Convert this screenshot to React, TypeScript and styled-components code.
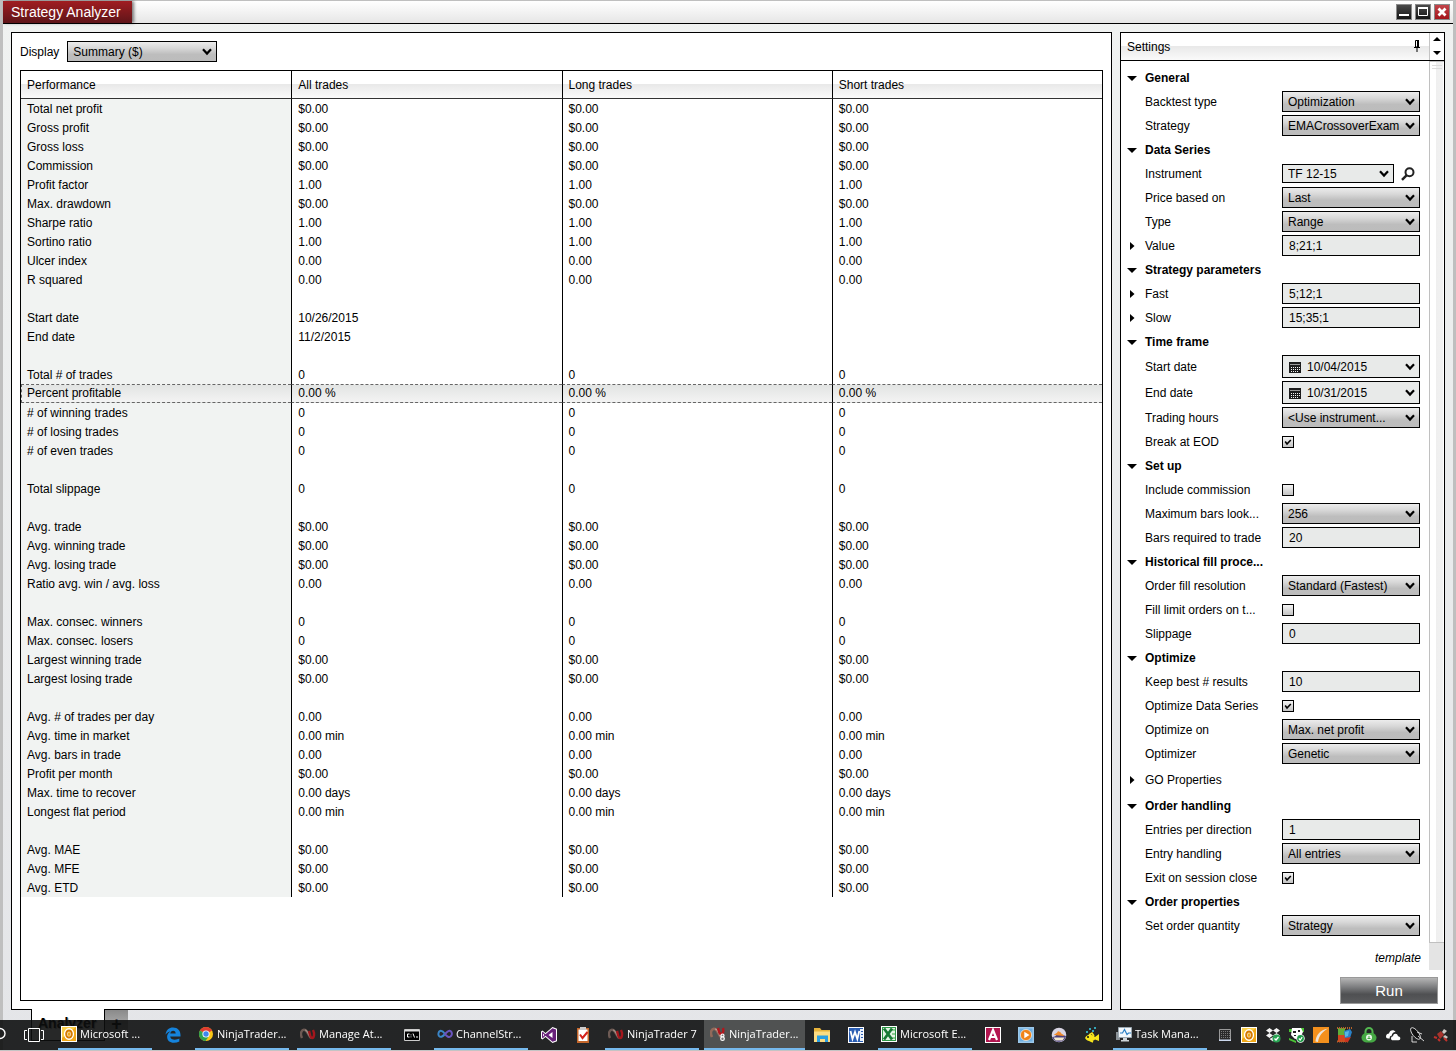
import React, { useId, useState } from "react";
import styled, { createGlobalStyle, css } from "styled-components";

const INK = "#000";
const BODY_FONT = '"Liberation Sans", Arial, sans-serif';
const TASK_FONT = '"Open Sans", "Noto Sans", sans-serif';
const SILVER = "linear-gradient(#ececec 0%, #d6d6d6 35%, #bdbdbd 65%, #bcbcbc 100%)";

const GlobalStyle = createGlobalStyle`
  *, *::before, *::after { box-sizing: border-box; }
  body { margin: 0; background: #bfbfbf; color: ${INK}; font: 12px/16px ${BODY_FONT}; }
  button, input, select { font: inherit; color: inherit; margin: 0; border-radius: 0; }
  button { padding: 0; border: 0; background: none; }
  svg { display: block; flex: none; }
`;

/* ---------- window frame ---------- */

const Frame = styled.div`
  min-height: 100vh;
  padding: 1px 3px 0;
  display: flex;
`;

const Window = styled.div`
  flex: 1;
  min-width: 0;
  display: flex;
  flex-direction: column;
  background: linear-gradient(#f0f2f1, #e4e5e8);
`;

const TitleBar = styled.header`
  height: 23px;
  display: flex;
  justify-content: space-between;
  align-items: stretch;
  border-bottom: 1px solid ${INK};
  background: linear-gradient(#fff, #e6e6e6);
`;

const Title = styled.h1`
  margin: 0;
  padding: 0 11px 0 8px;
  font-size: 14px;
  font-weight: 400;
  line-height: 22px;
  color: #fff;
  background: linear-gradient(#a01d21, #5f1519);
  box-shadow: 2px 0 3px rgba(0, 0, 0, 0.5);
`;

const WindowButtons = styled.div`
  display: flex;
  gap: 3px;
  padding: 3px 3px 0 0;
`;

const WindowButton = styled.button<{ $danger?: boolean }>`
  width: 16px;
  height: 16px;
  border: 1px solid #8a8a8a;
  background: ${(p) => (p.$danger ? "linear-gradient(#c2444a, #a3151b)" : "linear-gradient(#4a4a4a, #141414)")};
`;

const Main = styled.main`
  flex: 1;
  display: flex;
  gap: 8px;
  padding: 8px 8px 0;
`;

const Panel = styled.section`
  display: flex;
  flex-direction: column;
  border: 1px solid ${INK};
  background: #fff;
`;

const ReportPanel = styled(Panel)`
  flex: 1;
  min-width: 0;
  padding: 8px;
  gap: 8px;
`;

const DisplayRow = styled.div`
  display: flex;
  align-items: center;
  gap: 8px;
`;

/* ---------- report table ---------- */

const TableBox = styled.div`
  flex: 1;
  border: 1px solid ${INK};
`;

const Report = styled.table`
  width: 100%;
  table-layout: fixed;
  border-collapse: separate;
  border-spacing: 0;

  th, td {
    height: 19px;
    padding: 2px 6px 0;
    line-height: 17px;
    text-align: left;
    font-weight: 400;
    white-space: nowrap;
  }
  th + td, th + th, td + td { border-left: 1px solid ${INK}; }
  thead th {
    height: 28px;
    border-bottom: 1px solid #333;
    background: linear-gradient(#fff 0%, #fff 50%, #e9e9e9 50%, #fafafa 100%);
  }
  tbody th { background: #f1f3f2; }
`;

const ReportRow = styled.tr<{ $selected?: boolean }>`
  ${(p) =>
    p.$selected &&
    css`
      && > * {
        padding-top: 0;
        border-top: 1px dashed #666;
        border-bottom: 1px dashed #666;
        background: linear-gradient(#e2e4e3, #f3f3f3);
      }
      && > th { border-left: 1px dashed #666; padding-left: 5px; }
    `}
`;

/* ---------- form controls ---------- */

const SelectShell = styled.span<{ $width: number; $flat?: boolean }>`
  display: grid;
  grid-template-columns: minmax(0, 1fr) 20px;
  align-items: center;
  width: ${(p) => p.$width}px;
  height: ${(p) => (p.$flat ? 19 : 21)}px;
  border: 1px solid ${INK};
  background: ${(p) => (p.$flat ? "#e8eae9" : SILVER)};

  svg {
    grid-area: 1 / 2;
    justify-self: end;
    margin-right: 4px;
    pointer-events: none;
  }
`;

const SelectInput = styled.select`
  grid-area: 1 / 1 / 2 / 3;
  width: 100%;
  height: 100%;
  padding: 0 20px 0 5px;
  border: 0;
  appearance: none;
  background: transparent;
`;

const TextInput = styled.input`
  width: 138px;
  height: 21px;
  padding: 0 6px;
  border: 1px solid ${INK};
  background: #e8eae9;
`;

const DateShell = styled.span`
  display: flex;
  align-items: center;
  width: 138px;
  height: 23px;
  padding: 0 4px 0 6px;
  gap: 6px;
  border: 1px solid ${INK};
  background: #e8eae9;
`;

const DateInput = styled.input`
  flex: 1;
  min-width: 0;
  padding: 0;
  border: 0;
  background: transparent;
`;

const CheckShell = styled.span`
  display: grid;
  width: 12px;
  height: 12px;

  > * { grid-area: 1 / 1; }
  svg { pointer-events: none; visibility: hidden; }
  input:checked + svg { visibility: visible; }
`;

const CheckInput = styled.input`
  width: 12px;
  height: 12px;
  border: 1px solid ${INK};
  appearance: none;
  background: linear-gradient(#f4f4f4, #c4c4c4);
`;

/* ---------- settings panel ---------- */

const SettingsPanel = styled(Panel)`
  flex: none;
  width: 325px;
`;

const SettingsHeader = styled.div`
  height: 28px;
  display: flex;
  align-items: center;
  border-bottom: 1px solid ${INK};
  background: linear-gradient(#fff 0%, #fff 50%, #e9e9e9 50%, #fafafa 100%);
`;

const SettingsTitle = styled.h2`
  flex: 1;
  margin: 0;
  padding-left: 6px;
  font-size: 12px;
  font-weight: 400;
`;

const PinButton = styled.button`
  padding: 0 9px 2px 0;
`;

const Spinner = styled.div`
  align-self: stretch;
  width: 15px;
  display: flex;
  flex-direction: column;
  justify-content: space-between;
  align-items: center;
  padding: 4px 0 5px;
  border-left: 1px solid #c4c4c4;
  background: #fff;
`;

const SettingsBody = styled.div`
  flex: 1;
  display: flex;
`;

const SettingsList = styled.div`
  flex: 1;
  padding-top: 5px;
`;

const SettingRow = styled.div<{ $height?: number }>`
  display: grid;
  grid-template-columns: 24px 137px 1fr;
  align-items: center;
  height: ${(p) => p.$height ?? 24}px;
`;

const Expander = styled.button<{ $open?: boolean }>`
  width: ${(p) => (p.$open ? 21 : 22)}px;
  height: 16px;
  display: grid;
  place-items: center;
`;

const SettingLabel = styled.label`
  grid-column: 2;
  white-space: nowrap;
`;

const GroupLabel = styled.h3`
  grid-column: 2;
  margin: 0;
  font-size: 12px;
  font-weight: 700;
  white-space: nowrap;
`;

const ControlCell = styled.div`
  grid-column: 3;
  display: flex;
  align-items: center;
  gap: 7px;
  padding-bottom: 1px;
`;

const TemplateRow = styled.div`
  display: flex;
  justify-content: flex-end;
  padding: 12px 8px 0 0;
`;

const TemplateLink = styled.a`
  color: inherit;
  font-style: italic;
  text-decoration: none;
`;

const ScrollTrack = styled.div`
  width: 15px;
  padding-bottom: 27px;
  display: flex;
  background: #e4e4e4;
`;

const ScrollThumb = styled.div`
  flex: 1;
  padding: 3px 2px 0;
  border: 1px solid #c0c0c0;
  border-width: 1px 0 1px 1px;
  background: linear-gradient(90deg, #fff 45%, #efefef 45%, #f2f2f2 90%, #fff 90%);

  &::before {
    content: "";
    display: block;
    height: 4px;
    border: 1px solid #ddd;
    border-width: 1px 0;
  }
`;

const SettingsFooter = styled.div`
  display: flex;
  justify-content: flex-end;
  padding: 7px 6px 5px;
`;

const RunButton = styled.button`
  width: 98px;
  height: 27px;
  border: 1px solid #999;
  font-size: 15px;
  color: #fff;
  background: linear-gradient(#b5b5b5 0%, #77787a 40%, #4f5052 65%, #5a5b5d 100%);
`;

/* ---------- workspace tabs ---------- */

const WorkspaceTabs = styled.nav`
  display: flex;
  height: 42px;
  margin-top: -1px;
  padding: 0 28px 10px;
`;

const WorkspaceTab = styled.button`
  width: 74px;
  padding: 0 6px 3px;
  border: 1px solid ${INK};
  border-top: 0;
  background: #fff;
  font-size: 14px;
  font-weight: 700;
  text-align: left;
  text-shadow: 1px 1px 1px #999;
`;

const AddTab = styled.button`
  width: 23px;
  height: 30px;
  margin-top: 1px;
  padding-bottom: 3px;
  font-size: 18px;
  font-weight: 700;
  background: linear-gradient(#8a8a8a, #c8c8c8);
`;

/* ---------- desktop task bar ---------- */

const TaskBar = styled.footer`
  position: fixed;
  left: 0;
  right: 0;
  bottom: 0;
  height: 31px;
  display: flex;
  padding-right: 3px;
  border-bottom: 1px solid #c4c4c4;
  background: rgba(12, 14, 13, 0.89);
  color: #fff;
  font-family: ${TASK_FONT};
  font-size: 11px;
  overflow: hidden;
`;

const TaskStart = styled.div`
  flex: none;
  width: 53px;
  display: flex;
  align-items: center;
  gap: 18px;
`;

const TaskGroups = styled.div`
  flex: 1;
  display: flex;
`;

const TaskGroup = styled.div`
  display: flex;
  padding-left: 1px;
`;

const Pinned = styled.button<{ $dense?: boolean }>`
  flex: none;
  width: ${(p) => (p.$dense ? 33 : 34)}px;
  display: grid;
  place-items: center;
`;

const OpenTask = styled.button<{ $active?: boolean }>`
  flex: none;
  display: flex;
  align-items: center;
  gap: 3px;
  white-space: nowrap;
  border-bottom: 2px solid #76b9ed;
  ${(p) =>
    p.$active
      ? css`
          width: 101px;
          margin-left: 1px;
          padding-left: 6px;
          background: #505252;
        `
      : css`
          width: 94px;
          margin: 0 4px;
          padding-left: 3px;
        `}
`;

const Tray = styled.div`
  display: flex;
`;

const TrayButton = styled.button`
  width: 24px;
  display: grid;
  place-items: center;
`;

/* ---------- drawings ---------- */

const Chevron = () => (
  <svg width="10" height="8" viewBox="0 0 10 8">
    <path d="M1 1.3 5 5.6 9 1.3" fill="none" stroke="#000" strokeWidth="2.2" />
  </svg>
);

const Arrow = ({ to }: { to: "up" | "down" | "right" }) =>
  to === "right" ? (
    <svg width="5" height="8" viewBox="0 0 5 8"><path d="M0 0 4.500 4 0 8z" /></svg>
  ) : to === "down" ? (
    <svg width="10" height="5" viewBox="0 0 10 5"><path d="M0 0h10L5 5z" /></svg>
  ) : (
    <svg width="8" height="4" viewBox="0 0 8 4"><path d="M0 4h8L4 0z" /></svg>
  );

const SmallDown = () => (
  <svg width="8" height="4" viewBox="0 0 8 4"><path d="M0 0h8L4 4z" /></svg>
);

const Pin = () => (
  <svg width="6" height="12" viewBox="0 0 6 12">
    <path d="M1.500.5h3V7h-3zM0 7.500h6M3 8v4" fill="none" stroke="#000" />
    <path d="M3 0h2v7H3z" />
  </svg>
);

const Magnifier = () => (
  <svg width="14" height="14" viewBox="0 0 14 14">
    <circle cx="8.5" cy="5.2" r="4" fill="none" stroke="#222" strokeWidth="2" />
    <path d="M5.5 8.3 1 12.8" stroke="#222" strokeWidth="2.4" />
  </svg>
);

const Calendar = () => (
  <svg width="12" height="12" viewBox="0 0 12 12">
    <path d="M0 1h12v11H0z" fill="#1c1c1c" />
    <path d="M1 3.500h10" stroke="#9a9a9a" />
    <path d="M2 6.500h9M2 8.500h9M2 10.500h7" stroke="#f2f2f2" strokeDasharray="1 1" />
  </svg>
);

const Tick = () => (
  <svg width="12" height="12" viewBox="0 0 12 12">
    <path d="M3.2 5.6 5 8l3.8-4" fill="none" stroke="#000" strokeWidth="1.6" />
  </svg>
);

const art: Record<string, React.ReactNode> = {
  outlook: <><path d="M0 0h16v16H0z" fill="#fff" /><path d="M1 1h14v14H1z" fill="#f0a818" /><path d="M1 1h14L1 12z" fill="#fbd04a" /><ellipse cx="8" cy="8" rx="3.2" ry="4" fill="none" stroke="#fff" strokeWidth="3.800" /><ellipse cx="8" cy="8" rx="2.800" ry="3.600" fill="none" stroke="#d47a00" strokeWidth="2" /></>,
  edge: <path d="M.5 7.5C1.2 3 4 .5 8 .5c4.800 0 7.500 3.300 7.500 7.500v1.500H5.200c.2 2.400 2.200 3.300 4.600 3.300 1.700 0 3.200-.5 4.500-1.200v3c-1.600.8-3.500 1.200-5.400 1.200-4.200 0-6.800-2.300-6.800-6 0-2.300 1.300-4.300 3.300-5.400C3.500 4.700 1.800 5.700.5 7.500zM5.300 6.600h5.400c0-1.700-.9-2.900-2.600-2.900-1.600 0-2.600 1.300-2.800 2.900z" fill="#1583dc" />,
  chrome: <><circle cx="8" cy="8" r="7" fill="#fbc616" /><path d="M8 8 1.900 4.500A7 7 0 0 1 14.100 4.500z" fill="#e03c31" /><path d="M8 8 1.900 4.500A7 7 0 0 0 7.500 15L11 10z" fill="#2fa24f" /><circle cx="8" cy="8" r="3.600" fill="#fff" /><circle cx="8" cy="8" r="2.700" fill="#3f86ee" /></>,
  ninja: <><path d="M2 12C-.5 7 2 3 5 4s4 7 6 8" fill="none" stroke="#6d5a54" strokeWidth="2.400" /><path d="M5 4c3 0 4 8 7 8" fill="none" stroke="#a8968c" strokeWidth="1.200" /><path d="M9 5c1 3 1 7 3 7s3-4 1-8" fill="none" stroke="#a5161c" strokeWidth="2.400" /></>,
  ninja8: <><path d="M2 11C-.5 6 2 2 5 3s4 7 6 8" fill="none" stroke="#92695a" strokeWidth="2.600" /><path d="M5 3c3 0 4 6 6 8" fill="none" stroke="#c1aaa0" strokeWidth="1.200" /><path d="M8 2c1 3 1 6 3 6s3-3 2-6" fill="none" stroke="#b3161c" strokeWidth="2.400" /><circle cx="12.500" cy="9.500" r="1.500" fill="#777" stroke="#fff" strokeWidth="1.200" /><circle cx="12.500" cy="12.700" r="1.800" fill="#777" stroke="#fff" strokeWidth="1.200" /></>,
  cmd: <><path d="M.5 2.500h15v11H.5z" fill="#000" stroke="#ccc" /><path d="M1 3h14v1.500H1z" fill="#ddd" /><path d="M5.500 7H3.500v3h2M7 7.500v.8M7 9.500v.8M9 6.500l1.500 4M12 10h2" fill="none" stroke="#fff" /></>,
  blend: <><path d="M8 8C6 5 4.500 4.500 3 5S.8 8.500 2 10s3.500 1 6-2" fill="none" stroke="#3a86c8" strokeWidth="2" /><path d="M8 8c2.500-3 4.500-4 6-2.500s1 4-.5 5S10 11 8 8z" fill="none" stroke="#6a55c0" strokeWidth="2" /></>,
  vs: <><path d="M11.500 0 16 1.800v12.400L11.500 16 4.500 10 1.500 12.500 0 11.500v-7L1.500 3.500l3 2.500z" fill="#fff" /><path d="M11.500 1.200 15 2.600v10.800l-3.500 1.400L4.500 8.800 1.800 11.200 1 10.500v-5l.8-.7 2.700 2.400zM11.500 5 7.500 8l4 3zM2 6.500v3L3.400 8z" fill="#68217a" fillRule="evenodd" /></>,
  todo: <><path d="M2 1h12v15H2z" fill="#c4662a" /><path d="M3.500 2.500h9V14h-9z" fill="#fff" /><path d="M5 0h6v3H5z" fill="#ccc" /><path d="M5 7.500l2.500 3.500L12.500 5" fill="none" stroke="#d3221c" strokeWidth="2" /></>,
  explorer: <><path d="M0 1h6l1.500 2H16v12H0z" fill="#e8b43c" /><path d="M0 4.500h16V15H0z" fill="#fbdc83" /><path d="M3 8.500h11V15h-3v-3H6v3H3z" fill="#2b9fe2" /></>,
  word: <><path d="M0 0h16v16H0z" fill="#fff" /><path d="M1 1h14v14H1z" fill="#2c5fb4" /><path d="M12 2h3v12h-3z" fill="#e8f0fb" /><path d="M2.500 4 4.500 12 7 5l2.300 7 2-8" fill="none" stroke="#fff" strokeWidth="1.800" /><path d="M13 4.500h2M13 7.500h2M13 10.500h2" stroke="#2c5fb4" /></>,
  excel: <><path d="M0 0h16v16H0z" fill="#fff" /><path d="M1 1h14v14H1z" fill="#2f9a48" /><path d="M2 2h12v12H2z" fill="#e4f3e4" /><path d="M11 3h3v2h-3zM11 7h3v2h-3zM11 11h3v2h-3z" fill="#8ccb90" /><path d="M3 2.500l8 11M11 2.500l-8 11" stroke="#187a35" strokeWidth="2.800" /></>,
  access: <><path d="M0 0h16v16H0z" fill="#fff" /><path d="M1 1h14v14H1z" fill="#b31650" /><path d="M4 13 8 3l4 10M5.500 10h5" fill="none" stroke="#fff" strokeWidth="2.200" /></>,
  media: <><path d="M0 0h16v16H0z" fill="#9cc8ea" /><path d="M1.500 1.500h13v13h-13z" fill="#6fb0e2" /><circle cx="8" cy="8" r="5.600" fill="#f08419" stroke="#fff" strokeWidth=".6" /><path d="M6.300 4.800 11.500 8l-5.200 3.200z" fill="#fff" /></>,
  photo: <><circle cx="8" cy="8" r="7.300" fill="#d9d6e4" /><path d="M1 10c3 0 4-1 5-3 2-2 4 1 9 2a7.300 7.300 0 0 1-14 1z" fill="#4a3f7c" /><path d="M3 8c1-2 3-1 4-4 1 1 2 0 3 2s3 1 3 3z" fill="#f08a2b" /><path d="M2.500 10.500h11l-2 3h-7z" fill="#f3ead2" /></>,
  fish: <><path d="M1 11c2-4 7-4 10-1l4-3v7l-4-1.500c-3 3-8 2-10-1.500z" fill="#f7e61c" /><path d="M5 8l3-2 2 3M5 13l4 2" fill="none" stroke="#f7e61c" strokeWidth="1.600" /><circle cx="4" cy="10" r="1" fill="#111" /><path d="M2 5h2M5 2h2M8 4h2M10 1h2" stroke="#3bd0e8" strokeWidth="1.500" /></>,
  taskmgr: <><path d="M0 6h4v8H0z" fill="#8b9297" /><path d="M2.500 1.500h13v10h-13z" fill="#f3f8fb" stroke="#9aa7b0" /><path d="M4 7l2.500 0 2-3.500 2.500 5 1.500-1.500H15" fill="none" stroke="#2a7fc4" strokeWidth="1.200" /><path d="M7 12h4v2H7zM5 14h8v1.500H5z" fill="#cfd6da" /></>,
  grid: <><path d="M2.500 2.500h11v11h-11z" fill="#2a2a2a" stroke="#999" /><path d="M4 4.500h9M4 6.500h9M4 8.500h9M4 10.500h9" stroke="#777" strokeDasharray="1 1" /><path d="M2 12.500h12V14H2z" fill="#cdd9ee" /></>,
  dropbox: <><path d="M4.500 1 8 3.500 4.500 6 1 3.500zM11.500 1 15 3.500 11.500 6 8 3.500zM4.500 6 8 8.500 4.500 11 1 8.500zM11.500 6 15 8.500 11.500 11 8 8.500zM4.500 12 8 10l3 2-3 2.500z" fill="#f4f4f4" /><circle cx="11.500" cy="11.500" r="4" fill="#2aa454" /><path d="M9.500 11.500 11 13l2.500-3" fill="none" stroke="#fff" strokeWidth="1.300" /></>,
  cow: <><path d="M0 2h5v3H0zM11 1h4v4h-4zM0 11l7 3v2l-7-3z" fill="#4ac435" /><path d="M3 1h9l2 4-3 6-5 1-4-4z" fill="#fff" /><path d="M4 4h3v2H4zM9 3h2v2H9zM5 8h2v1H5z" fill="#222" /><circle cx="11.500" cy="11.500" r="4.200" fill="#fff" /><circle cx="11.500" cy="11.500" r="3.400" fill="#1c9b45" /><path d="M9.800 11.500 11.200 13l2-2.800" fill="none" stroke="#fff" strokeWidth="1.200" /></>,
  swoosh: <><path d="M0 0h16v16H0z" fill="#f3901d" /><path d="M2.500 14.500C3 8 7 3 15 1.500 9 5 6 9 5 15z" fill="#ece3d8" /></>,
  mosaic: <><path d="M1 1h7v7H1z" fill="#5fae38" /><path d="M1 8h7v7H1z" fill="#d4451f" /><path d="M0 1h16M0 14.500h12" stroke="#b5622a" strokeWidth="2" strokeDasharray="1 1" /><path d="M7 4l6-2 2 3-2 6-5 1z" fill="#2b82c9" /><path d="M8 5l4-1-1 5-3 1z" fill="#58b6e6" /><path d="M8 11l6-1-3 5H8z" fill="#c93420" /></>,
  lock: <><path d="M4.500 7V4.500a3.500 3.500 0 0 1 7 0V7" fill="none" stroke="#53b850" strokeWidth="2" /><rect x="0.500" y="6" width="15" height="9.500" rx="4.700" fill="#45a843" /><circle cx="8" cy="10.500" r="3" fill="#e9f5e8" /><path d="M6.500 11.500h3M8 9v3" stroke="#45a843" /></>,
  cloud: <path d="M1 9.500C1 7.500 2.500 6.500 4 6.500 4.500 3 9 2 10.500 5 8 5 6.800 7 6.800 8.500 5 8.800 4.500 10 4.800 11.500H3C1.800 11.500 1 10.500 1 9.500zM6 11.500c0-1.500 1-2.200 2-2.200.3-3.300 4.500-3.300 5 0 3 .1 3 4 .5 4H8c-1.300 0-2-.8-2-1.800z" fill="#fff" />,
  dish: <><ellipse cx="6.500" cy="6.500" rx="3" ry="7" transform="rotate(-38 6.500 6.500)" fill="#111" stroke="#eee" strokeWidth=".8" /><path d="M3 9v6h5M9 9l6 5M8 5l5 2" fill="none" stroke="#e8e8e8" strokeWidth=".9" /></>,
  satellite: <><path d="M4 7l4-3 3 4-4 4z" fill="#a8332c" /><path d="M11 2l3 2-3 3-2-2zM12 8l3 2-2 2-3-2z" fill="#d0c8c4" /><path d="M1 10l3 1M5 12l2 2M11 11l3 3" stroke="#c2302b" strokeWidth="2" /></>,
};

const TaskIcon = ({ name }: { name: string }) => (
  <svg width="16" height="16" viewBox="0 0 16 16">{art[name]}</svg>
);

/* ---------- data ---------- */

type Metric = [string, string, string, string] | null;
const same = (name: string, value: string): Metric => [name, value, value, value];

const metrics: Metric[] = [
  same("Total net profit", "$0.00"),
  same("Gross profit", "$0.00"),
  same("Gross loss", "$0.00"),
  same("Commission", "$0.00"),
  same("Profit factor", "1.00"),
  same("Max. drawdown", "$0.00"),
  same("Sharpe ratio", "1.00"),
  same("Sortino ratio", "1.00"),
  same("Ulcer index", "0.00"),
  same("R squared", "0.00"),
  null,
  ["Start date", "10/26/2015", "", ""],
  ["End date", "11/2/2015", "", ""],
  null,
  same("Total # of trades", "0"),
  same("Percent profitable", "0.00 %"),
  same("# of winning trades", "0"),
  same("# of losing trades", "0"),
  same("# of even trades", "0"),
  null,
  same("Total slippage", "0"),
  null,
  same("Avg. trade", "$0.00"),
  same("Avg. winning trade", "$0.00"),
  same("Avg. losing trade", "$0.00"),
  same("Ratio avg. win / avg. loss", "0.00"),
  null,
  same("Max. consec. winners", "0"),
  same("Max. consec. losers", "0"),
  same("Largest winning trade", "$0.00"),
  same("Largest losing trade", "$0.00"),
  null,
  same("Avg. # of trades per day", "0.00"),
  same("Avg. time in market", "0.00 min"),
  same("Avg. bars in trade", "0.00"),
  same("Profit per month", "$0.00"),
  same("Max. time to recover", "0.00 days"),
  same("Longest flat period", "0.00 min"),
  null,
  same("Avg. MAE", "$0.00"),
  same("Avg. MFE", "$0.00"),
  same("Avg. ETD", "$0.00"),
];

type Setting =
  | { kind: "group"; label: string }
  | { kind: "select" | "date" | "lookup"; label: string; value: string }
  | { kind: "text"; label: string; value: string; expandable?: boolean }
  | { kind: "check"; label: string; checked: boolean }
  | { kind: "branch"; label: string };

const settings: Setting[] = [
  { kind: "group", label: "General" },
  { kind: "select", label: "Backtest type", value: "Optimization" },
  { kind: "select", label: "Strategy", value: "EMACrossoverExam" },
  { kind: "group", label: "Data Series" },
  { kind: "lookup", label: "Instrument", value: "TF 12-15" },
  { kind: "select", label: "Price based on", value: "Last" },
  { kind: "select", label: "Type", value: "Range" },
  { kind: "text", label: "Value", value: "8;21;1", expandable: true },
  { kind: "group", label: "Strategy parameters" },
  { kind: "text", label: "Fast", value: "5;12;1", expandable: true },
  { kind: "text", label: "Slow", value: "15;35;1", expandable: true },
  { kind: "group", label: "Time frame" },
  { kind: "date", label: "Start date", value: "10/04/2015" },
  { kind: "date", label: "End date", value: "10/31/2015" },
  { kind: "select", label: "Trading hours", value: "<Use instrument..." },
  { kind: "check", label: "Break at EOD", checked: true },
  { kind: "group", label: "Set up" },
  { kind: "check", label: "Include commission", checked: false },
  { kind: "select", label: "Maximum bars look...", value: "256" },
  { kind: "text", label: "Bars required to trade", value: "20" },
  { kind: "group", label: "Historical fill proce..." },
  { kind: "select", label: "Order fill resolution", value: "Standard (Fastest)" },
  { kind: "check", label: "Fill limit orders on t...", checked: false },
  { kind: "text", label: "Slippage", value: "0" },
  { kind: "group", label: "Optimize" },
  { kind: "text", label: "Keep best # results", value: "10" },
  { kind: "check", label: "Optimize Data Series", checked: true },
  { kind: "select", label: "Optimize on", value: "Max. net profit" },
  { kind: "select", label: "Optimizer", value: "Genetic" },
  { kind: "branch", label: "GO Properties" },
  { kind: "group", label: "Order handling" },
  { kind: "text", label: "Entries per direction", value: "1" },
  { kind: "select", label: "Entry handling", value: "All entries" },
  { kind: "check", label: "Exit on session close", checked: true },
  { kind: "group", label: "Order properties" },
  { kind: "select", label: "Set order quantity", value: "Strategy" },
];

type Task = { icon: string; label?: string; active?: boolean };

const taskGroups: { dense?: boolean; tasks: Task[] }[] = [
  { tasks: [{ icon: "outlook", label: "Microsoft ..." }, { icon: "edge" }] },
  { tasks: [{ icon: "chrome", label: "NinjaTrader..." }, { icon: "ninja", label: "Manage At..." }, { icon: "cmd" }] },
  { tasks: [{ icon: "blend", label: "ChannelStr..." }, { icon: "vs" }, { icon: "todo" }] },
  {
    tasks: [
      { icon: "ninja", label: "NinjaTrader 7" },
      { icon: "ninja8", label: "NinjaTrader...", active: true },
      { icon: "explorer" },
      { icon: "word" },
    ],
  },
  {
    dense: true,
    tasks: [{ icon: "excel", label: "Microsoft E..." }, { icon: "access" }, { icon: "media" }, { icon: "photo" }, { icon: "fish" }],
  },
  { tasks: [{ icon: "taskmgr", label: "Task Mana..." }] },
];

const trayIcons = ["grid", "outlook", "dropbox", "cow", "swoosh", "mosaic", "lock", "cloud", "dish", "satellite"];

/* ---------- components ---------- */

function Dropdown({ id, value, width = 138, flat }: { id: string; value: string; width?: number; flat?: boolean }) {
  return (
    <SelectShell $width={width} $flat={flat}>
      <SelectInput id={id} defaultValue={value}>
        <option>{value}</option>
      </SelectInput>
      <Chevron />
    </SelectShell>
  );
}

function SettingControl({ id, item }: { id: string; item: Setting }) {
  switch (item.kind) {
    case "select":
      return <Dropdown id={id} value={item.value} />;
    case "lookup":
      return (
        <>
          <Dropdown id={id} value={item.value} width={112} flat />
          <button aria-label="Find instrument"><Magnifier /></button>
        </>
      );
    case "text":
      return <TextInput id={id} defaultValue={item.value} />;
    case "date":
      return (
        <DateShell>
          <Calendar />
          <DateInput id={id} defaultValue={item.value} />
          <button aria-label="Open calendar"><Chevron /></button>
        </DateShell>
      );
    case "check":
      return (
        <CheckShell>
          <CheckInput id={id} type="checkbox" defaultChecked={item.checked} />
          <Tick />
        </CheckShell>
      );
    default:
      return null;
  }
}

const rowHeights: Partial<Record<Setting["kind"], number>> = { date: 26, branch: 28 };

function SettingLine({ item }: { item: Setting }) {
  const id = useId();
  const isGroup = item.kind === "group";
  const isBranch = item.kind === "branch" || (item.kind === "text" && item.expandable);
  return (
    <SettingRow $height={rowHeights[item.kind]}>
      {(isGroup || isBranch) && (
        <Expander aria-label={`Toggle ${item.label}`} $open={isGroup}>
          <Arrow to={isGroup ? "down" : "right"} />
        </Expander>
      )}
      {isGroup ? (
        <GroupLabel>{item.label}</GroupLabel>
      ) : item.kind === "branch" ? (
        <SettingLabel as="span">{item.label}</SettingLabel>
      ) : (
        <SettingLabel htmlFor={id}>{item.label}</SettingLabel>
      )}
      <ControlCell>
        <SettingControl id={id} item={item} />
      </ControlCell>
    </SettingRow>
  );
}

function ReportTable() {
  const [selected, setSelected] = useState(15);
  return (
    <Report>
      <thead>
        <tr>
          <th scope="col">Performance</th>
          <th scope="col">All trades</th>
          <th scope="col">Long trades</th>
          <th scope="col">Short trades</th>
        </tr>
      </thead>
      <tbody>
        {metrics.map((metric, i) => {
          const [name, ...values] = metric ?? ["", "", "", ""];
          return (
            <ReportRow key={i} $selected={i === selected} onClick={() => setSelected(i)}>
              <th scope="row">{name}</th>
              {values.map((value, c) => (
                <td key={c}>{value}</td>
              ))}
            </ReportRow>
          );
        })}
      </tbody>
    </Report>
  );
}

function DesktopBar() {
  return (
    <TaskBar>
      <TaskStart>
        <svg width="6" height="16" viewBox="0 0 6 16"><circle cx="0" cy="6.500" r="5" fill="none" stroke="#fff" strokeWidth="1.400" /></svg>
        <svg width="20" height="14" viewBox="0 0 20 14">
          <path d="M4.500.5h11v13h-11zM3 2.500H.5v9H3M17 2.500h2.500v9H17" fill="none" stroke="#fff" />
        </svg>
      </TaskStart>
      <TaskGroups>
        {taskGroups.map((group, g) => (
          <TaskGroup key={g}>
            {group.tasks.map((task) =>
              task.label ? (
                <OpenTask key={task.icon} $active={task.active}>
                  <TaskIcon name={task.icon} />
                  {task.label}
                </OpenTask>
              ) : (
                <Pinned key={task.icon} $dense={group.dense} aria-label={task.icon}>
                  <TaskIcon name={task.icon} />
                </Pinned>
              ),
            )}
          </TaskGroup>
        ))}
      </TaskGroups>
      <Tray>
        {trayIcons.map((name) => (
          <TrayButton key={name} aria-label={name}>
            <TaskIcon name={name} />
          </TrayButton>
        ))}
      </Tray>
    </TaskBar>
  );
}

export default function App() {
  return (
    <>
      <GlobalStyle />
      <Frame>
        <Window>
          <TitleBar>
            <Title>Strategy Analyzer</Title>
            <WindowButtons>
              <WindowButton aria-label="Minimize">
                <svg width="14" height="14" viewBox="0 0 14 14"><path d="M2 9h10v2H2z" fill="#fff" /></svg>
              </WindowButton>
              <WindowButton aria-label="Maximize">
                <svg width="14" height="14" viewBox="0 0 14 14"><path d="M2.500 3.500h9v7h-9z" fill="none" stroke="#fff" /><path d="M2 2h10v2H2z" fill="#fff" /></svg>
              </WindowButton>
              <WindowButton aria-label="Close" $danger>
                <svg width="14" height="14" viewBox="0 0 14 14"><path d="M3.500 3.500l7 7M10.500 3.500l-7 7" stroke="#fff" strokeWidth="2.800" /></svg>
              </WindowButton>
            </WindowButtons>
          </TitleBar>
          <Main>
            <ReportPanel>
              <DisplayRow>
                <label htmlFor="display">Display</label>
                <Dropdown id="display" value="Summary ($)" width={150} />
              </DisplayRow>
              <TableBox>
                <ReportTable />
              </TableBox>
            </ReportPanel>
            <SettingsPanel>
              <SettingsHeader>
                <SettingsTitle>Settings</SettingsTitle>
                <PinButton aria-label="Pin settings"><Pin /></PinButton>
                <Spinner>
                  <button aria-label="Scroll up"><Arrow to="up" /></button>
                  <button aria-label="Scroll down"><SmallDown /></button>
                </Spinner>
              </SettingsHeader>
              <SettingsBody>
                <SettingsList>
                  {settings.map((item) => (
                    <SettingLine key={item.label} item={item} />
                  ))}
                  <TemplateRow>
                    <TemplateLink href="#template">template</TemplateLink>
                  </TemplateRow>
                </SettingsList>
                <ScrollTrack>
                  <ScrollThumb />
                </ScrollTrack>
              </SettingsBody>
              <SettingsFooter>
                <RunButton>Run</RunButton>
              </SettingsFooter>
            </SettingsPanel>
          </Main>
          <WorkspaceTabs>
            <WorkspaceTab>Analyzer</WorkspaceTab>
            <AddTab aria-label="Add tab">+</AddTab>
          </WorkspaceTabs>
        </Window>
      </Frame>
      <DesktopBar />
    </>
  );
}
